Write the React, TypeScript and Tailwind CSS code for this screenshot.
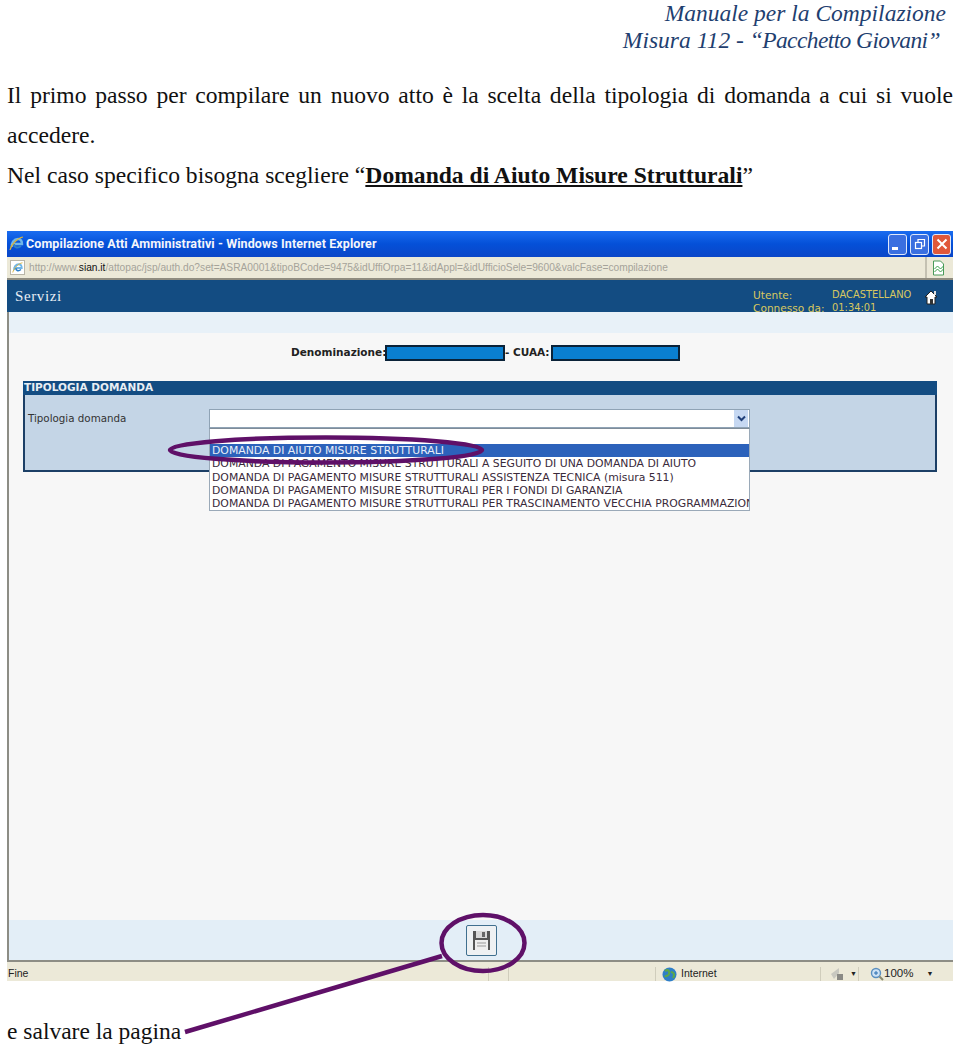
const serif = "font-['Liberation_Serif',serif]";

const options = [
	"DOMANDA DI AIUTO MISURE STRUTTURALI",
	"DOMANDA DI PAGAMENTO MISURE STRUTTURALI A SEGUITO DI UNA DOMANDA DI AIUTO",
	"DOMANDA DI PAGAMENTO MISURE STRUTTURALI ASSISTENZA TECNICA (misura 511)",
	"DOMANDA DI PAGAMENTO MISURE STRUTTURALI PER I FONDI DI GARANZIA",
	"DOMANDA DI PAGAMENTO MISURE STRUTTURALI PER TRASCINAMENTO VECCHIA PROGRAMMAZIONE",
];

function IeLogo({ size = 16 }: { size?: number }) {
	return (
		<svg width={size} height={size} viewBox="0 0 16 16" className="shrink-0">
			<path d="M3 11c-1-4 2-8 6-8 3 0 4 2 4 5H5" fill="none" stroke="#6fb6e8" strokeWidth="2.4" />
			<path d="M5 8c0 3 3 5 7 2" fill="none" stroke="#2f7fc8" strokeWidth="2" />
			<path d="M1 14C2 9 8 2 14 1" fill="none" stroke="#d9b23a" strokeWidth="1.2" />
		</svg>
	);
}

function WinButton({ color, children }: { color: string; children: React.ReactNode }) {
	return (
		<div className={`flex h-[21px] w-[19px] items-center justify-center rounded-[3px] border border-[#dfe8fa] ${color}`}>
			{children}
		</div>
	);
}

function TitleBar() {
	return (
		<div className="flex h-[26px] shrink-0 items-center bg-gradient-to-b from-[#1a6cf0] via-[#0450d8] to-[#0a46c8] pr-[2px] pl-[2px]">
			<IeLogo size={16} />
			<span className="ml-[1px] font-['Roboto',sans-serif] text-[12.5px] font-bold tracking-[0.1px] whitespace-nowrap text-[#f4f6fb]">
				Compilazione Atti Amministrativi - Windows Internet Explorer
			</span>
			<div className="ml-auto flex gap-[3px]">
				<WinButton color="bg-[#3a6fe0]">
					<div className="mt-[9px] mr-[6px] h-[3px] w-[6px] bg-white" />
				</WinButton>
				<WinButton color="bg-[#3a6fe0]">
					<svg width="12" height="12" viewBox="0 0 12 12" fill="none" stroke="white" strokeWidth="1.2">
						<rect x="1.5" y="4.5" width="6" height="6" />
						<path d="M4 4V1.5h6.5V8H8" />
					</svg>
				</WinButton>
				<WinButton color="bg-[#e0583a]">
					<svg width="12" height="12" viewBox="0 0 12 12" stroke="white" strokeWidth="2">
						<path d="M1.5 1.5l9 9M10.5 1.5l-9 9" />
					</svg>
				</WinButton>
			</div>
		</div>
	);
}

function AddressBar() {
	return (
		<div className="flex h-[23px] shrink-0 items-center border-b-2 border-[#8f8c80] bg-[#ece9d8] pl-[3px]">
			<div className="flex h-[15px] w-[15px] items-center justify-center border border-[#b9b6a8] bg-white">
				<IeLogo size={12} />
			</div>
			<span className="ml-[4px] font-['Liberation_Sans',sans-serif] text-[10.2px] whitespace-nowrap text-[#a5a39a]">
				http://www.<span className="text-[#111]">sian.it</span>
				/attopac/jsp/auth.do?set=ASRA0001&amp;tipoBCode=9475&amp;idUffiOrpa=11&amp;idAppl=&amp;idUfficioSele=9600&amp;valcFase=compilazione
			</span>
			<div className="mr-[7px] ml-auto flex h-[21px] w-[21px] items-center justify-end border-l-2 border-[#c4c1b2]">
				<svg width="15" height="16" viewBox="0 0 14 16" fill="none">
					<path d="M2 1h7l3 3v11H2z" fill="white" stroke="#4a9a5a" />
					<path d="M3 9l3-3 3 3 3-3M3 12l3-3 3 3 3-3" stroke="#3aa04a" />
				</svg>
			</div>
		</div>
	);
}

function SianHeader() {
	return (
		<div className="flex h-[32px] shrink-0 items-start bg-[#134c82] pr-[15px]">
			<span className={`${serif} mt-[8px] ml-[8px] text-[15px] leading-[17px] tracking-[0.6px] text-[#e8eef4]`}>Servizi</span>
			<div className="mt-[9px] ml-auto w-[79px] font-['DejaVu_Sans',sans-serif] text-[10.6px] leading-[12.5px] text-[#d8c860]">
				<div>Utente:</div>
				<div className="whitespace-nowrap">Connesso da:</div>
			</div>
			<div className="mt-[9px] w-[92px] font-['DejaVu_Sans',sans-serif] text-[9.9px] leading-[12.5px] text-[#d8c860]">
				<div>DACASTELLANO</div>
				<div>01:34:01</div>
			</div>
			<svg width="14" height="15" viewBox="0 0 14 15" className="mt-[10px]">
				<path d="M7 1L1 7h2v7h8V7h2z" fill="white" stroke="#222" />
				<rect x="10" y="1" width="2" height="4" fill="#ddd" />
				<rect x="6" y="9" width="3" height="5" fill="#333" />
			</svg>
		</div>
	);
}

function RedactedBox({ width }: { width: string }) {
	return <div className={`h-[16px] shrink-0 border-2 border-[#0a2238] bg-[#0a7fd0] ${width}`} />;
}

function TipologiaPanel() {
	return (
		<div className="mt-[20px] mr-[16px] ml-[14px]">
			<div className="flex h-[14px] items-center bg-[#134c82] pl-[1px] font-['DejaVu_Sans',sans-serif] text-[10.5px] font-bold text-[#e8eef4]">
				TIPOLOGIA DOMANDA
			</div>
			<div className="relative flex h-[77px] items-start border-2 border-t-0 border-[#1c3f66] bg-[#c4d5e6] pt-[14px]">
				<span className="ml-[3px] w-[181px] font-['DejaVu_Sans',sans-serif] text-[10.3px] leading-[19px] text-[#333]">
					Tipologia domanda
				</span>
				<div className="flex h-[19px] w-[541px] items-center justify-end border border-[#8fa3b5] bg-white pr-[1px]">
					<div className="flex h-[17px] w-[14px] items-center justify-center bg-[#c6d8f2]">
						<svg width="9" height="7" viewBox="0 0 9 7" fill="none" stroke="#1f3f7a" strokeWidth="2">
							<path d="M1 1.5l3.5 3.5L8 1.5" />
						</svg>
					</div>
				</div>
				<div className="absolute top-[33px] left-[184px] h-[83px] w-[541px] overflow-hidden border border-[#9aa9b8] border-t-[#7f8c99] bg-white pt-[15px] font-['DejaVu_Sans',sans-serif] text-[10.85px] leading-[13.3px] whitespace-nowrap text-[#3a2a3a]">
					{options.map((opt, i) => (
						<div key={opt} className={i === 0 ? "bg-[#2c62bb] pl-[2px] text-[#e8eef8]" : "pl-[2px]"}>
							{opt}
						</div>
					))}
				</div>
			</div>
		</div>
	);
}

function SavedPage() {
	return (
		<div className="flex min-h-0 grow flex-col">
			<SianHeader />
			<div className="flex min-h-0 grow flex-col border-l-2 border-[#8d8d85] bg-[#f7f7f7]">
				<div className="h-[21px] shrink-0 bg-[#e8f1f8]" />
				<div className="grow">
					<div className="mt-[12px] flex h-[16px] items-center pl-[282px] font-['DejaVu_Sans',sans-serif] text-[10.5px] font-bold text-[#222]">
						<span className="w-[94px] whitespace-nowrap">Denominazione:</span>
						<RedactedBox width="w-[120px]" />
						<span className="whitespace-nowrap">- CUAA:</span>
						<span className="w-[1px]" />
						<RedactedBox width="w-[129px]" />
					</div>
					<TipologiaPanel />
				</div>
				<div className="flex h-[42px] shrink-0 items-start justify-center border-b-2 border-[#8d8d85] bg-[#e3eef7] pt-[5px]">
					<div className="flex h-[31px] w-[31px] items-center justify-center rounded-[2px] border border-[#3f6f8f] bg-[#eef1f3]">
						<svg width="19" height="21" viewBox="0 0 19 21">
							<path d="M1 1h17v19H1z" fill="#555" />
							<rect x="4" y="1" width="11" height="7" fill="#d8d8d8" />
							<rect x="10" y="2" width="3" height="5" fill="#666" />
							<rect x="3" y="10" width="13" height="10" fill="#eee" />
							<path d="M5 13h9M5 16h9" stroke="#999" />
						</svg>
					</div>
				</div>
			</div>
		</div>
	);
}

function StatusBar() {
	return (
		<div className="flex h-[19px] shrink-0 items-center bg-[#ece9d8] pt-[5px] font-['Liberation_Sans',sans-serif] text-[10.5px] text-[#222]">
			<span className="ml-[1px] w-[480px]">Fine</span>
			<div className="h-full w-[21px] border-x border-[#d0cdbc]" />
			<div className="h-full w-[146px]" />
			<div className="flex h-full w-[166px] items-center border-x border-[#d0cdbc] pl-[6px]">
				<svg width="15" height="15" viewBox="0 0 15 15" className="shrink-0">
					<circle cx="7.5" cy="7.5" r="7" fill="#2f7fc8" />
					<path d="M3 4c3-2 5 0 4 3s-3 1-4 3M9 5c3 0 4 3 2 6" stroke="#5ca84a" strokeWidth="2.2" fill="none" />
				</svg>
				<span className="ml-[4px]">Internet</span>
			</div>
			<div className="flex h-full w-[38px] items-center border-r border-[#d0cdbc] pl-[8px]">
				<svg width="16" height="14" viewBox="0 0 16 14" className="shrink-0">
					<path d="M2 7l8-6v5l-5 6z" fill="#c8c8c0" />
					<rect x="8" y="7" width="6" height="6" fill="#8a8a85" />
				</svg>
				<span className="ml-[5px] text-[7px]">▼</span>
			</div>
			<svg width="14" height="14" viewBox="0 0 14 14" className="ml-[11px] shrink-0" fill="none">
				<circle cx="6" cy="6" r="4.5" fill="#cfe3f5" stroke="#5a8fc0" strokeWidth="1.4" />
				<path d="M9.5 9.5L13 13" stroke="#8a8a70" strokeWidth="2" />
				<path d="M4 6h4M6 4v4" stroke="#2a6fb0" />
			</svg>
			<span className="text-[11.5px]">100%</span>
			<span className="ml-[13px] text-[7px]">▼</span>
		</div>
	);
}

export default function App() {
	return (
		<div className={`${serif} relative h-[1046px] w-[960px] overflow-hidden bg-white`}>
			<div className="h-[54px] text-right text-[23.5px] leading-[27px] text-[#1f3f70] italic">
				<div className="pr-[14px]">Manuale per la Compilazione</div>
				<div className="pr-[20px]">
					Misura 112 - <span className="tracking-[-0.6px]">“Pacchetto Giovani”</span>
				</div>
			</div>
			<div className="pr-[7px] pl-[7px] text-[23.6px] leading-[40px] text-[#111]">
				<p className="mt-[21px] text-justify">
					Il primo passo per compilare un nuovo atto è la scelta della tipologia di domanda a cui si vuole accedere.
				</p>
				<p>
					Nel caso specifico bisogna scegliere “
					<span className="font-bold underline">Domanda di Aiuto Misure Strutturali</span>”
				</p>
			</div>
			<div className="mt-[36px] ml-[7px] flex h-[750px] w-[946px] flex-col">
				<TitleBar />
				<AddressBar />
				<SavedPage />
				<StatusBar />
			</div>
			<p className="mt-[36px] ml-[7px] text-[23.5px] leading-[28px] text-[#111]">e salvare la pagina</p>
			{/* annotazioni viola sopra lo screenshot */}
			<svg width="960" height="1046" viewBox="0 0 960 1046" fill="none" stroke="#5f1068" className="absolute top-0 left-0">
				<ellipse cx="326" cy="450" rx="156" ry="12.5" strokeWidth="4.5" />
				<ellipse cx="483" cy="943" rx="41.5" ry="28" strokeWidth="4.5" />
				<path d="M185 1032L442 956" strokeWidth="4.5" />
			</svg>
		</div>
	);
}
